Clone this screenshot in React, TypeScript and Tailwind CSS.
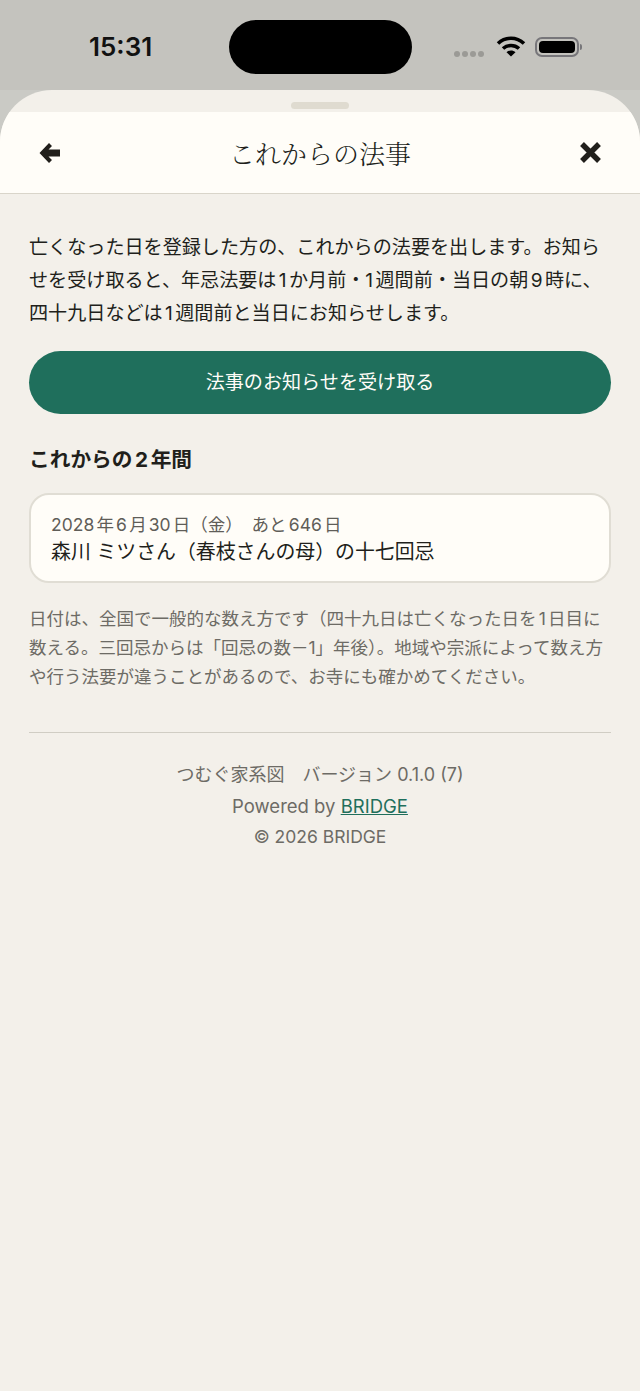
const jp = "font-['Inter','Noto_Sans_CJK_JP',sans-serif]";

const WifiIcon = () => (
  <svg width="30" height="22" viewBox="0 0 30 22" fill="none" stroke="#000" strokeWidth="3.6">
    <path d="M2 8.5C9.5 1.5 20.5 1.5 28 8.5" />
    <path d="M7 13.5C11.5 9.5 18.5 9.5 23 13.5" />
    <path d="M15 21.5 10.5 17.2C13 15 17 15 19.5 17.2Z" fill="#000" stroke="none" />
  </svg>
);

const Battery = () => (
  <div className="flex items-center gap-[1px]">
    <div className="flex h-[20px] w-[44px] rounded-[7px] border-2 border-[#77767a] p-[2px]">
      <div className="flex-1 rounded-[4px] bg-black" />
    </div>
    <div className="h-[6px] w-[2px] rounded-r-sm bg-[#77767a]" />
  </div>
);

const BackIcon = () => (
  <svg width="22" height="20" viewBox="0 0 22 20" fill="#211f1b">
    <path d="M10 0 13 3 9.5 6.5H21V13.5H9.5L13 17 10 20 0.5 10Z" />
  </svg>
);

const CloseIcon = () => (
  <svg width="23" height="23" viewBox="0 0 23 23" fill="none" stroke="#211f1b" strokeWidth="5.4">
    <path d="M3 3 20 20M20 3 3 20" />
  </svg>
);

export default function App() {
  return (
    <div className={`flex h-[1391px] w-[640px] flex-col overflow-hidden bg-[#cacac5] [text-autospace:normal] ${jp}`}>
      <div className="flex h-[90px] shrink-0 items-center bg-[#c4c3be] pt-[3px]">
        <div className="ml-[89px] w-[140px] text-[26px] font-semibold leading-none text-[#111]">15:31</div>
        <div className="h-[54px] w-[183px] rounded-full bg-black" />
        <div className="ml-[42px] flex items-center">
          <div className="mt-[14px] flex gap-[2px]">
            <div className="h-[6px] w-[6px] rounded-full bg-[#9b9a96]" />
            <div className="h-[6px] w-[6px] rounded-full bg-[#9b9a96]" />
            <div className="h-[6px] w-[6px] rounded-full bg-[#9b9a96]" />
            <div className="h-[6px] w-[6px] rounded-full bg-[#9b9a96]" />
          </div>
          <div className="ml-[12px] mb-[1px]"><WifiIcon /></div>
          <div className="ml-[9px]"><Battery /></div>
        </div>
      </div>

      <div className="flex flex-1 flex-col overflow-hidden rounded-t-[52px] bg-[#f3f0ea]">
        <div className="flex h-[22px] shrink-0 justify-center pt-[12px]">
          <div className="h-[7px] w-[58px] rounded-full bg-[#dfdbd0]" />
        </div>
        <header className="flex h-[82px] shrink-0 items-center justify-between border-b border-[#d9d5ca] bg-[#fffdf8] pl-[39px] pr-[38px]">
          <BackIcon />
          <h1 className="text-[26px] font-light text-[#211f1b] [font-family:'Noto_Serif_CJK_JP','Noto_Sans_CJK_JP',serif]">これからの法事</h1>
          <CloseIcon />
        </header>

        <main className="flex flex-col px-[29px] pt-[37px]">
          <p className="text-[19.1px] leading-[33px] text-[#211f1b]">
            亡くなった日を登録した方の、これからの法要を出します。お知らせを受け取ると、年忌法要は1か月前・1週間前・当日の朝9時に、四十九日などは1週間前と当日にお知らせします。
          </p>
          <button className="mt-[21px] h-[63px] rounded-full bg-[#1f6f5c] text-[19.1px] text-[#fffdf8]">
            法事のお知らせを受け取る
          </button>
          <h2 className="mt-[31px] text-[20.7px] font-bold leading-[30px] text-[#211f1b]">これからの2年間</h2>
          <div className="mt-[18px] flex h-[90px] flex-col justify-center rounded-[20px] border-2 border-[#e0ddd4] bg-[#fffdf8] px-[20px]">
            <div className="text-[17.5px] leading-[27px] text-[#5f5d58]">2028年6月30日（金）　あと646日</div>
            <div className="text-[19.9px] leading-[28px] text-[#211f1b]">森川 ミツさん（春枝さんの母）の十七回忌</div>
          </div>
          <p className="mt-[21px] text-[17.5px] leading-[29px] text-[#6d6b65]">
            日付は、全国で一般的な数え方です（四十九日は亡くなった日を1日目に数える。三回忌からは「回忌の数－1」年後）。地域や宗派によって数え方や行う法要が違うことがあるので、お寺にも確かめてください。
          </p>
          <div className="mt-[41px] border-t border-[#d0cdc4]" />
          <footer className="mt-[26px] flex flex-col items-center text-[#6d6b65]">
            <div className="text-[18px] leading-[31px]">つむぐ家系図　バージョン 0.1.0 (7)</div>
            <div className="text-[18.5px] leading-[32px]">
              Powered by <a className="text-[#1f6f5c] underline">BRIDGE</a>
            </div>
            <div className="text-[17.5px] leading-[30px]">© 2026 BRIDGE</div>
          </footer>
        </main>
      </div>
    </div>
  );
}
